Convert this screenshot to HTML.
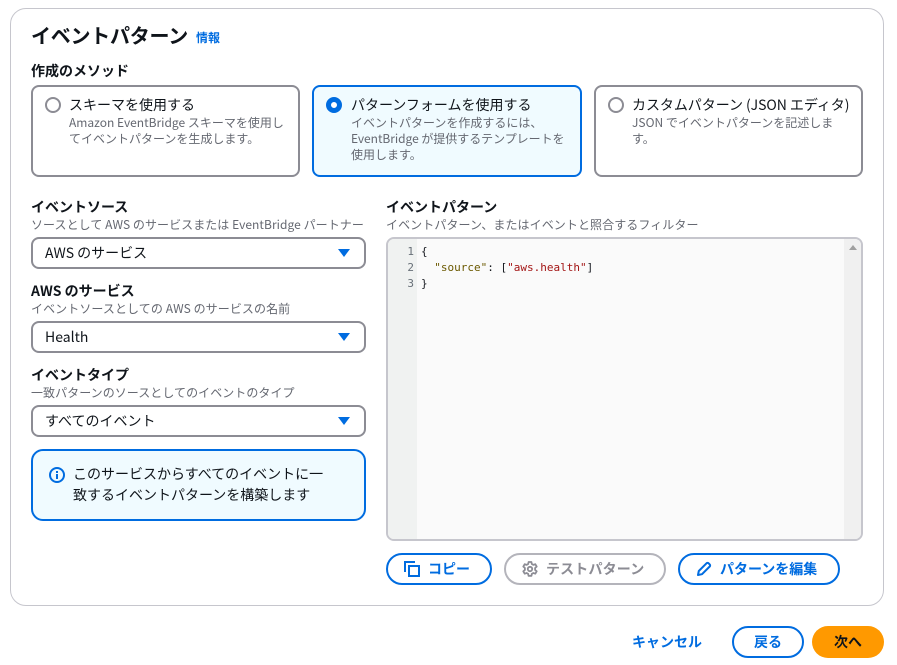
<!DOCTYPE html>
<html lang="ja"><head><meta charset="utf-8"><style>
html,body{margin:0;padding:0;background:#fff}
body{width:897px;height:665px;position:relative;overflow:hidden;font-family:"Noto Sans CJK JP","Liberation Sans",sans-serif;color:#0f141a}
.a,.t{position:absolute;box-sizing:border-box}
.t{white-space:nowrap}
.card{border:2px solid #8c8c94;border-radius:8px;background:#fff;top:85px;height:92px}
.card.on{border-color:#006ce0;background:#f0fbff}
.radio{width:16px;height:16px;border:2px solid #8c8c94;border-radius:50%;top:97px;background:#fff}
.rt{font-size:14px;line-height:20px;top:95px;color:#0f141a}
.rd{font-size:12px;line-height:16px;color:#656871;top:115px;white-space:normal}
.lb{font-size:14px;line-height:20px;font-weight:700;color:#0f141a}
.ds{font-size:12px;line-height:16px;color:#656871}
.sel{left:31px;width:335px;height:32px;border:2px solid #8c8c94;border-radius:8px;background:#fff}
.sv{left:45px;font-size:14px;line-height:20px;color:#0f141a}
.tri{width:0;height:0;border-left:6px solid transparent;border-right:6px solid transparent;border-top:8px solid #006ce0;left:338px}
.btn{border:2px solid #006ce0;border-radius:16px;height:32px;top:553px;background:#fff}
.bt{font-size:14px;line-height:20px;font-weight:700;color:#006ce0;top:559px}
.code{font-family:"DejaVu Sans Mono","Liberation Mono",monospace;font-size:11px;line-height:16px;white-space:pre}
</style></head><body>
<div class="a" style="left:10px;top:8px;width:874px;height:598px;border:1px solid #c6c6cd;border-radius:16px"></div>
<div class="t" style="left:31px;top:21px;font-size:20px;line-height:28px;font-weight:700;letter-spacing:-.25px">イベントパターン</div>
<div class="t" style="left:196px;top:30px;font-size:12px;line-height:16px;font-weight:700;color:#006ce0">情報</div>
<div class="t lb" style="left:31px;top:61px">作成のメソッド</div>

<div class="a card" style="left:31px;width:269px"></div>
<div class="a radio" style="left:45px"></div>
<div class="t rt" style="left:69px">スキーマを使用する</div>
<div class="a rd" style="left:69px;width:222px">Amazon EventBridge スキーマを使用してイベントパターンを生成します。</div>

<div class="a card on" style="left:312px;width:270px"></div>
<div class="a radio" style="left:326px;border:5px solid #006ce0"></div>
<div class="t rt" style="left:351px">パターンフォームを使用する</div>
<div class="a rd" style="left:351px;width:222px">イベントパターンを作成するには、<br><span style="letter-spacing:-.04px">EventBridge が提供するテンプレートを</span>使用します。</div>

<div class="a card" style="left:594px;width:269px"></div>
<div class="a radio" style="left:608px"></div>
<div class="t rt" style="left:632px;letter-spacing:-.05px">カスタムパターン (JSON エディタ)</div>
<div class="a rd" style="left:632px;width:222px">JSON でイベントパターンを記述します。</div>

<div class="t lb" style="left:31px;top:197px">イベントソース</div>
<div class="t ds" style="left:31px;top:217px;letter-spacing:.055px">ソースとして AWS のサービスまたは EventBridge パートナー</div>
<div class="a sel" style="top:237px"></div>
<div class="t sv" style="top:243px">AWS のサービス</div>
<div class="a tri" style="top:249px"></div>

<div class="t lb" style="left:31px;top:281px">AWS のサービス</div>
<div class="t ds" style="left:31px;top:301px;letter-spacing:.08px">イベントソースとしての AWS のサービスの名前</div>
<div class="a sel" style="top:321px"></div>
<div class="t sv" style="top:327px">Health</div>
<div class="a tri" style="top:333px"></div>

<div class="t lb" style="left:31px;top:365px">イベントタイプ</div>
<div class="t ds" style="left:31px;top:385px;letter-spacing:.05px">一致パターンのソースとしてのイベントのタイプ</div>
<div class="a sel" style="top:405px"></div>
<div class="t sv" style="top:411px">すべてのイベント</div>
<div class="a tri" style="top:417px"></div>

<div class="a" style="left:31px;top:449px;width:335px;height:72px;border:2px solid #006ce0;border-radius:12px;background:#f0fbff"></div>
<svg class="a" style="left:49px;top:467px" width="16" height="16" viewBox="0 0 16 16" fill="none"><circle cx="8" cy="8" r="7" stroke="#006ce0" stroke-width="2"/><path d="M8 7v5" stroke="#006ce0" stroke-width="2"/><path d="M8 4v2" stroke="#006ce0" stroke-width="2"/></svg>
<div class="t" style="left:73px;top:464px;font-size:14px;line-height:21px;color:#0f141a">このサービスからすべてのイベントに一<br>致するイベントパターンを構築します</div>

<div class="t lb" style="left:386px;top:197px">イベントパターン</div>
<div class="t ds" style="left:386px;top:217px;letter-spacing:.08px">イベントパターン、またはイベントと照合するフィルター</div>
<div class="a" style="left:386px;top:237px;width:477px;height:304px;border:2px solid #c6c6cd;border-radius:8px;background:#fafafa;overflow:hidden">
<div class="a" style="left:0;top:0;width:29px;height:100%;background:#f0f2f1"></div>
<div class="a" style="right:0;top:0;width:17px;height:100%;background:#f0f0f0"></div>
</div>
<div class="a" style="left:849px;top:245px;width:0;height:0;border-left:4px solid transparent;border-right:4px solid transparent;border-bottom:5px solid #a0a0a0"></div>
<div class="t code" style="left:400px;top:244px;width:14px;text-align:right;color:#687078">1
2
3</div>
<div class="t code" style="left:421px;top:244px;color:#16191f">{
  <span style="color:#6b5900">"source"</span>: [<span style="color:#a31515">"aws.health"</span>]
}</div>

<div class="a btn" style="left:386px;width:106px"></div>
<svg class="a" style="left:404px;top:561px" width="16" height="16" viewBox="0 0 16 16" fill="none" stroke="#006ce0" stroke-width="2"><path d="M1 11V1h10"/><rect x="5" y="5" width="10" height="10"/></svg>
<div class="t bt" style="left:428px">コピー</div>

<div class="a btn" style="left:504px;width:162px;border-color:#b4b4bb"></div>
<svg class="a" style="left:522px;top:561px" width="16" height="16" viewBox="0 0 16 16" fill="none" stroke="#8c8c94" stroke-width="1.8" stroke-linejoin="round"><path d="M6.6 1h2.8l.4 2 1.500.9 2-.7 1.400 2.400-1.600 1.400v1.900l1.600 1.400-1.400 2.400-2-.7-1.500.9-.4 2H6.600l-.4-2-1.500-.9-2 .7-1.400-2.400 1.600-1.400V7L1.300 5.600l1.400-2.400 2 .7 1.500-.9z"/><circle cx="8" cy="8" r="2.200"/></svg>
<div class="t bt" style="left:546px;color:#8c8c94;letter-spacing:.15px">テストパターン</div>

<div class="a btn" style="left:678px;width:162px"></div>
<svg class="a" style="left:696px;top:561px" width="16" height="16" viewBox="0 0 16 16" fill="none" stroke="#006ce0" stroke-width="2" stroke-linejoin="round"><path d="M2 14l.8-4L10.500 2.300a1.500 1.500 0 0 1 2.100 0l1.100 1.100a1.500 1.500 0 0 1 0 2.100L6 13.200z"/></svg>
<div class="t bt" style="left:720px">パターンを編集</div>

<div class="t bt" style="left:632px;top:632px">キャンセル</div>
<div class="a btn" style="left:732px;top:626px;width:72px"></div>
<div class="t bt" style="left:754px;top:632px">戻る</div>
<div class="a" style="left:812px;top:626px;width:72px;height:32px;border-radius:16px;background:#ff9900"></div>
<div class="t bt" style="left:834px;top:632px;color:#0f141a">次へ</div>
</body></html>
